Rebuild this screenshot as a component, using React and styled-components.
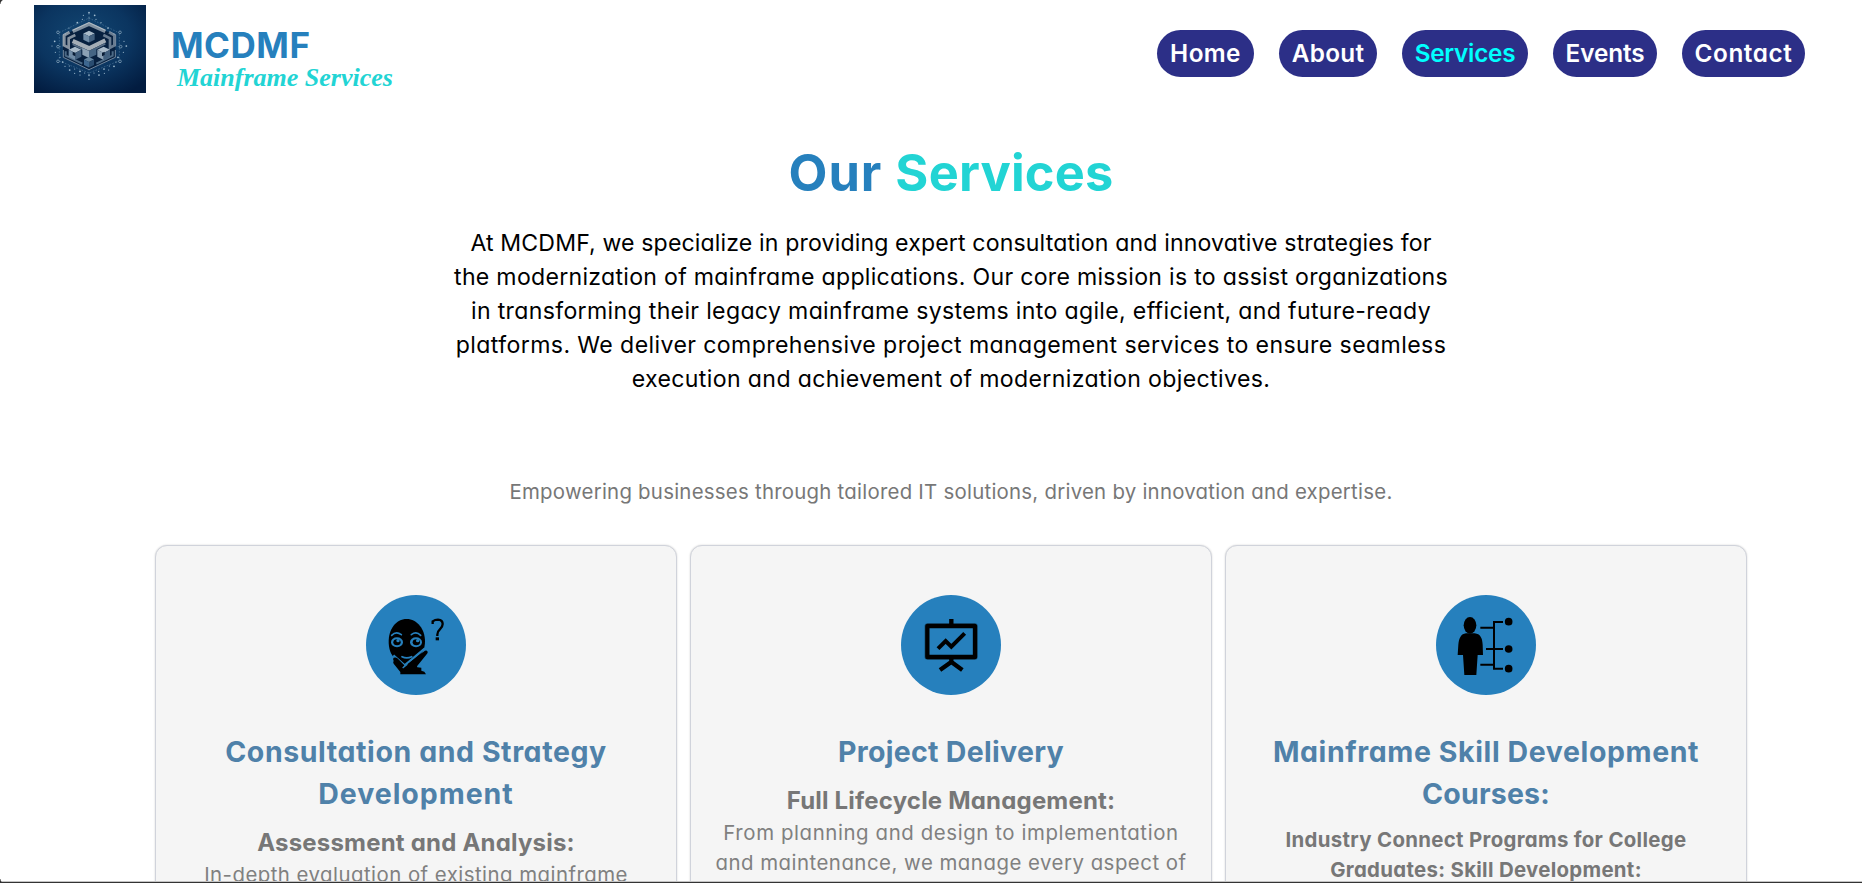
import React from 'react';
import styled, { createGlobalStyle } from 'styled-components';

const GlobalStyle = createGlobalStyle`
  * { box-sizing: border-box; }
  body {
    margin: 0;
    background: #fff;
    font-family: Inter, "Liberation Sans", sans-serif;
    font-feature-settings: "cv11";
    overflow: hidden;
  }
`;

const Page = styled.div`
  position: relative;
  height: 883px;
  overflow: hidden;
  background: #fff;
`;

const Header = styled.header`
  display: flex;
  align-items: flex-start;
  height: 98px;
  padding: 5px 57px 0 34px;
`;

const LogoArt = styled.svg`
  display: block;
  width: 112px;
  height: 88px;
  flex: none;
`;

const Brand = styled.div`
  display: flex;
  flex-direction: column;
  margin-left: 25px;
  padding-top: 20px;
`;

const BrandName = styled.span`
  font-size: 35px;
  line-height: 40px;
  font-weight: 700;
  letter-spacing: 0.5px;
  color: #2680bd;
`;

const BrandTag = styled.span`
  margin: -1px 0 0 6px;
  font-family: "Lucida Calligraphy", "Liberation Serif", serif;
  font-size: 26px;
  line-height: 28px;
  font-style: italic;
  font-weight: 700;
  letter-spacing: 0;
  white-space: nowrap;
  color: #22d4d4;
`;

const Nav = styled.nav`
  display: flex;
  gap: 25px;
  margin: 25px 0 0 auto;
`;

const NavLink = styled.a`
  width: ${(p) => p.$width}px;
  height: 47px;
  border-radius: 24px;
  background: #2c2f87;
  color: ${(p) => (p.$active ? '#00ffff' : '#fff')};
  font-size: 24.3px;
  line-height: 47px;
  font-weight: 600;
  text-align: center;
  white-space: nowrap;
  letter-spacing: ${(p) => p.$track}px;
`;

const Main = styled.main`
  display: flex;
  flex-direction: column;
  align-items: center;
  padding-left: 40px;
`;

const Title = styled.h1`
  margin: 37px 0 0;
  font-size: 50.5px;
  line-height: 75px;
  font-weight: 700;
  letter-spacing: 1px;
  color: #2680bd;
`;

const Accent = styled.span`
  color: #22d4d4;
  letter-spacing: 0.2px;
`;

const Line = styled.span`
  display: block;
  white-space: nowrap;
  letter-spacing: ${(p) => p.$track}px;
`;

const Intro = styled.p`
  margin: 16px 0 0;
  font-size: 23.1px;
  line-height: 34px;
  text-align: center;
  color: #000;
`;

const Tagline = styled.p`
  margin: 81px 0 38px;
  font-size: 20.4px;
  line-height: 30px;
  text-align: center;
  color: #777;
`;

const Cards = styled.section`
  display: grid;
  grid-template-columns: repeat(3, 522px);
  gap: 13px;
`;

const Card = styled.article`
  display: flex;
  flex-direction: column;
  align-items: center;
  height: 520px;
  padding-top: 49px;
  border: 1px solid #d0d3db;
  border-radius: 12px;
  background: #f5f5f5;
  box-shadow: 0 0 2px rgba(0, 0, 0, 0.18);
  text-align: center;
`;

const IconCircle = styled.div`
  width: 100px;
  height: 100px;
  border-radius: 50%;
  background: #2680bd;
`;

const IconArt = styled.svg`
  display: block;
  width: 100px;
  height: 100px;
`;

const CardTitle = styled.h2`
  margin: 36px 0 10px;
  font-size: 28.5px;
  line-height: 42px;
  font-weight: 700;
  color: #4f81a9;
`;

const CardLead = styled.h3`
  margin: 0 0 -1px;
  font-size: 24px;
  line-height: 36px;
  font-weight: 700;
  color: #777;
`;

const CardText = styled.p`
  margin: 0;
  font-size: 20.4px;
  line-height: 30px;
  font-weight: ${(p) => (p.$bold ? 700 : 400)};
  color: ${(p) => (p.$bold ? '#777' : '#808080')};
`;

const BottomEdge = styled.div`
  position: absolute;
  left: 0;
  right: 0;
  bottom: 0;
  height: 2px;
  border-top: 1px solid #c4c4c4;
  background: #333;
`;

const Corner = styled.div`
  position: absolute;
  left: 0;
  ${(p) => (p.$bottom ? 'bottom: 0;' : 'top: 0;')}
  width: 5px;
  height: 4px;
  background: radial-gradient(circle at 100% ${(p) => (p.$bottom ? '0' : '100%')}, transparent 4px, #333 5px);
`;

const Cube = ({ x, y, s, top = '#a9bac9', left = '#6f8ba6', right = '#42607f' }) => (
  <g transform={`translate(${x} ${y}) scale(${s})`}>
    <path d="M0-10 10-5 0 0-10-5Z" fill={top} />
    <path d="M-10-5 0 0V11L-10 6Z" fill={left} />
    <path d="M10-5 0 0V11L10 6Z" fill={right} />
  </g>
);

const nodes = [[72, 85], [258, 85], [72, 128], [260, 128], [72, 172], [258, 172]];
const dots = [
  [165, 26], [165, 42], [148, 34], [182, 34], [145, 46], [186, 46], [130, 56], [201, 56],
  [105, 72], [222, 72], [94, 90], [240, 90], [62, 112], [270, 112], [54, 126], [277, 126],
  [64, 145], [268, 145], [86, 174], [246, 174], [93, 187], [240, 187], [106, 186], [226, 186],
  [107, 198], [224, 198], [122, 195], [210, 195], [122, 208], [211, 208], [138, 202], [194, 202],
  [138, 213], [195, 213], [152, 207], [180, 207], [165, 213], [165, 226], [78, 160], [252, 160],
];

const Logo = () => (
  <LogoArt viewBox="0 3 336 264" preserveAspectRatio="none">
    <defs>
      <radialGradient id="sky" cx="45%" cy="35%" r="75%">
        <stop offset="0" stopColor="#124672" />
        <stop offset="0.55" stopColor="#0b3560" />
        <stop offset="1" stopColor="#021c40" />
      </radialGradient>
    </defs>
    <rect y="3" width="336" height="264" fill="url(#sky)" />
    <g stroke="#6d97b8" strokeWidth="2" fill="none" opacity="0.6">
      <path d="M165 28V60M165 195V226M76 86 165 42 254 86M76 128H90M242 128H256M76 171 165 207 254 171M76 90V124M256 90V124M76 132V168M256 132V168" strokeDasharray="5 4" />
    </g>
    <path d="M165 58 244 94V160L165 198 87 160V94Z" fill="#07203f" />
    <g fill="none" strokeLinejoin="miter">
      <path d="M116 82 165 60 214 82" stroke="#8090a0" strokeWidth="11" />
      <path d="M116 79 165 56 214 79" stroke="#b3bec6" strokeWidth="3" />
      <path d="M107 85 91 94V124L104 131V103L124 93" stroke="#8592a0" strokeWidth="8" />
      <path d="M225 85 241 94V124L228 131V103L208 93" stroke="#687b90" strokeWidth="8" />
      <path d="M105 82 87 92V126" stroke="#b0b8c0" strokeWidth="2" />
      <path d="M226 82 245 92V126" stroke="#91a0b0" strokeWidth="2" />
      <path d="M88 138V160L165 197 244 160V138" stroke="#71869d" strokeWidth="3" />
      <path d="M95 142V155L145 179M236 142V155L187 179" stroke="#4c6a86" strokeWidth="6" />
      <path d="M116 111 165 133 214 109" stroke="#a4adb6" strokeWidth="13" />
      <path d="M116 121 165 144 214 119" stroke="#586e86" strokeWidth="5" />
    </g>
    <path d="M145 132 165 141V162L145 152Z" fill="#8ba1b5" />
    <path d="M187 132 165 141V162L187 152Z" fill="#456584" />
    <Cube x={165} y={97} s={1.7} />
    <Cube x={123} y={147} s={1.9} />
    <Cube x={209} y={147} s={1.9} left="#8ba1b5" />
    <Cube x={165} y={174} s={1.5} top="#64849f" left="#3d6790" right="#294c70" />
    <path d="M116 143 124 147V157L116 153ZM204 147 212 143V153L204 157Z" fill="#0a1d36" />
    <g fill="none" stroke="#91adc3" strokeWidth="2">
      {nodes.map(([x, y]) => <circle key={`${x}-${y}`} cx={x} cy={y} r="4" />)}
    </g>
    <g fill="#a4bfd2">
      {dots.map(([x, y], i) => <circle key={i} cx={x} cy={y} r={i % 3 === 0 ? 2.6 : 1.7} />)}
    </g>
  </LogoArt>
);

const ThinkingIcon = () => (
  <IconArt viewBox="48 45 300 300">
    <path d="M170 117C138 117 115 148 116 188C117 216 128 232 143 242L170 258L200 238C216 224 225 207 225 184C225 148 202 117 170 117Z" />
    <g fill="none" stroke="#2680bd" strokeLinecap="round">
      <path d="M125 166Q138 153 154 164M184 164Q199 153 212 166" strokeWidth="5" />
      <path d="M156 230Q170 237 185 230" strokeWidth="5" />
    </g>
    <ellipse cx="141" cy="187" rx="18" ry="15" fill="#2680bd" />
    <ellipse cx="198" cy="187" rx="18" ry="15" fill="#2680bd" />
    <ellipse cx="141" cy="187" rx="11" ry="9" />
    <ellipse cx="199" cy="187" rx="11" ry="9" />
    <circle cx="144" cy="182" r="5" fill="#2680bd" />
    <circle cx="203" cy="182" r="5" fill="#2680bd" />
    <path d="M130 226 164 256 224 206" fill="none" stroke="#2680bd" strokeWidth="7" />
    <path d="M129 236Q135 229 142 235L163 256L157 265L221 215Q229 208 233 215Q234 218 230 223L201 259L202 262L214 263V272L223 275L228 283H151V276L131 251Q128 246 131 243Z" />
    <path d="M158 264 172 253" stroke="#2680bd" strokeWidth="4" />
    <path d="M248 132V124Q255 119 264 119Q278 120 278 132Q278 141 269 149Q262 155 262 164V168" fill="none" stroke="#000" strokeWidth="7" />
    <rect x="257" y="172" width="10" height="9" />
  </IconArt>
);

const BoardIcon = () => (
  <IconArt viewBox="33 45 300 300">
    <g fill="none" stroke="#000" strokeWidth="13">
      <rect x="112" y="138" width="143" height="93" rx="1" />
      <path d="M184 117V138M184 231V244M150 270 184 246 217 270" />
      <path d="M144 206 167 183 184 200 224 160" strokeWidth="12" />
    </g>
    <rect x="105" y="131" width="157" height="107" rx="6" fill="none" stroke="#000" strokeWidth="1" />
  </IconArt>
);

const SkillsIcon = () => (
  <IconArt viewBox="48 45 300 300">
    <ellipse cx="150" cy="136" rx="19" ry="25" />
    <path d="M138 160H164C181 162 187 174 188 194L189 225H173L169 285H133L129 225H113L115 194C117 174 123 162 138 160Z" />
    <path d="M181 143H222M249 126H222V266H249M198 207H249M181 254H222" fill="none" stroke="#000" strokeWidth="6" />
    <circle cx="266" cy="125" r="11.5" />
    <circle cx="266" cy="207" r="11.5" />
    <circle cx="266" cy="266" r="11.5" />
  </IconArt>
);

const links = [
  { label: 'Home', width: 97, track: 0.4 },
  { label: 'About', width: 98, track: 0.3 },
  { label: 'Services', width: 126, track: -0.25, active: true },
  { label: 'Events', width: 104, track: -0.1 },
  { label: 'Contact', width: 123, track: 0.6 },
];

const intro = [
  ['At MCDMF, we specialize in providing expert consultation and innovative strategies for', 0.14],
  ['the modernization of mainframe applications. Our core mission is to assist organizations', 0.29],
  ['in transforming their legacy mainframe systems into agile, efficient, and future-ready', 0.33],
  ['platforms. We deliver comprehensive project management services to ensure seamless', 0.4],
  ['execution and achievement of modernization objectives.', 0.37],
];

const cards = [
  {
    Icon: ThinkingIcon,
    title: [['Consultation and Strategy', 0.58], ['Development', 0.95]],
    lead: ['Assessment and Analysis:', 0.2],
    text: [['In-depth evaluation of existing mainframe', 0.47]],
  },
  {
    Icon: BoardIcon,
    title: [['Project Delivery', 0.3]],
    lead: ['Full Lifecycle Management:', 0.19],
    text: [
      ['From planning and design to implementation', 0.6],
      ['and maintenance, we manage every aspect of', 0.5],
    ],
  },
  {
    Icon: SkillsIcon,
    title: [['Mainframe Skill Development', 0.6], ['Courses:', 0.2]],
    bold: true,
    text: [
      ['Industry Connect Programs for College', 0.32],
      ['Graduates: Skill Development:', 0.31],
    ],
  },
];

const Lines = ({ items }) => items.map(([text, track]) => (
  <Line key={text} $track={track}>{text}</Line>
));

export default function App() {
  return (
    <Page>
      <GlobalStyle />
      <Header>
        <Logo />
        <Brand>
          <BrandName>MCDMF</BrandName>
          <BrandTag>Mainframe Services</BrandTag>
        </Brand>
        <Nav>
          {links.map((l) => (
            <NavLink key={l.label} $width={l.width} $track={l.track} $active={l.active}>{l.label}</NavLink>
          ))}
        </Nav>
      </Header>
      <Main>
        <Title>Our <Accent>Services</Accent></Title>
        <Intro><Lines items={intro} /></Intro>
        <Tagline>
          <Line $track={0.25}>Empowering businesses through tailored IT solutions, driven by innovation and expertise.</Line>
        </Tagline>
        <Cards>
          {cards.map(({ Icon, title, lead, text, bold }) => (
            <Card key={title[0][0]}>
              <IconCircle><Icon /></IconCircle>
              <CardTitle><Lines items={title} /></CardTitle>
              {lead && <CardLead><Lines items={[lead]} /></CardLead>}
              <CardText $bold={bold}><Lines items={text} /></CardText>
            </Card>
          ))}
        </Cards>
      </Main>
      <BottomEdge />
      <Corner />
      <Corner $bottom />
    </Page>
  );
}
